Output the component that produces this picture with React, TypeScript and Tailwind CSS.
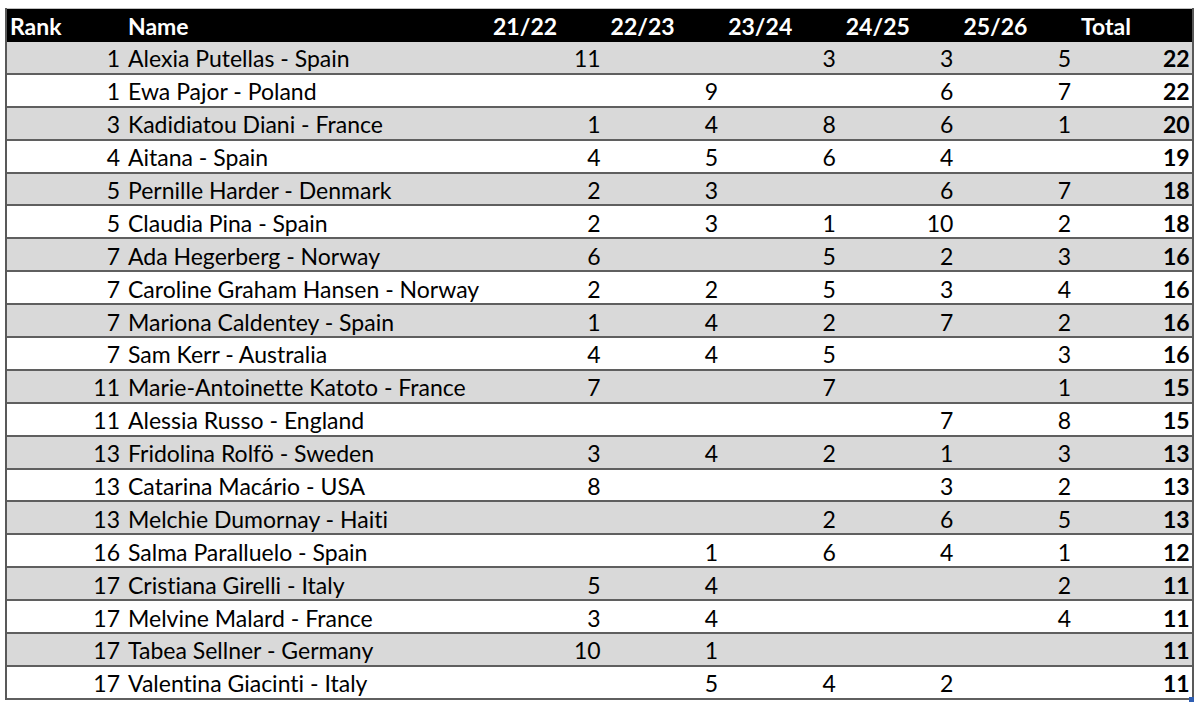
const seasons = ["21/22", "22/23", "23/24", "24/25", "25/26", "Total"]

type Row = [number, string, (number | null)[], number]

const rows: Row[] = [
  [1, "Alexia Putellas - Spain", [11, null, 3, 3, 5], 22],
  [1, "Ewa Pajor - Poland", [null, 9, null, 6, 7], 22],
  [3, "Kadidiatou Diani - France", [1, 4, 8, 6, 1], 20],
  [4, "Aitana - Spain", [4, 5, 6, 4, null], 19],
  [5, "Pernille Harder - Denmark", [2, 3, null, 6, 7], 18],
  [5, "Claudia Pina - Spain", [2, 3, 1, 10, 2], 18],
  [7, "Ada Hegerberg - Norway", [6, null, 5, 2, 3], 16],
  [7, "Caroline Graham Hansen - Norway", [2, 2, 5, 3, 4], 16],
  [7, "Mariona Caldentey - Spain", [1, 4, 2, 7, 2], 16],
  [7, "Sam Kerr - Australia", [4, 4, 5, null, 3], 16],
  [11, "Marie-Antoinette Katoto - France", [7, null, 7, null, 1], 15],
  [11, "Alessia Russo - England", [null, null, null, 7, 8], 15],
  [13, "Fridolina Rolfö - Sweden", [3, 4, 2, 1, 3], 13],
  [13, "Catarina Macário - USA", [8, null, null, 3, 2], 13],
  [13, "Melchie Dumornay - Haiti", [null, null, 2, 6, 5], 13],
  [16, "Salma Paralluelo - Spain", [null, 1, 6, 4, 1], 12],
  [17, "Cristiana Girelli - Italy", [5, 4, null, null, 2], 11],
  [17, "Melvine Malard - France", [3, 4, null, null, 4], 11],
  [17, "Tabea Sellner - Germany", [10, 1, null, null, null], 11],
  [17, "Valentina Giacinti - Italy", [null, 5, 4, 2, null], 11],
]

const cols = "grid grid-cols-[115px_365px_repeat(6,117.6px)]"

export default function App() {
  return (
    <div className="bg-white w-[1200px] h-[706px] pt-[8px] pl-[5px] text-[23px] leading-none text-black [font-variant-ligatures:none] font-['Lato','Liberation_Sans',sans-serif]">
      <div className="relative w-[1189px] border-x-2 border-[#595959]">
        <div className={`${cols} h-[34px] pt-[2px] bg-black border-t border-[#bfbfbf] text-white font-bold items-center`}>
          <div className="pl-[3px]">Rank</div>
          <div className="pl-[6px]">Name</div>
          {seasons.map(s => (
            <div key={s} className="pl-[6px]">{s}</div>
          ))}
        </div>
        {rows.map(([rank, name, vals, total], i) => (
          <div
            key={i}
            className={`${cols} h-[32.9px] pt-[3px] items-center border-b-2 border-[#5f5f5f] ${i % 2 === 0 ? "bg-[#d9d9d9]" : "bg-white"}`}
          >
            <div className="text-right pr-[2px]">{rank}</div>
            <div className="pl-[6px] whitespace-nowrap">{name}</div>
            {vals.map((v, j) => (
              <div key={j} className="text-right pr-[4px]">{v ?? ""}</div>
            ))}
            <div className="text-right pr-[3px] font-bold">{total}</div>
          </div>
        ))}
        <div className="absolute right-[-2px] bottom-[-2px] w-[5px] h-[5px] bg-[#2f5fb3]" />
      </div>
    </div>
  )
}
